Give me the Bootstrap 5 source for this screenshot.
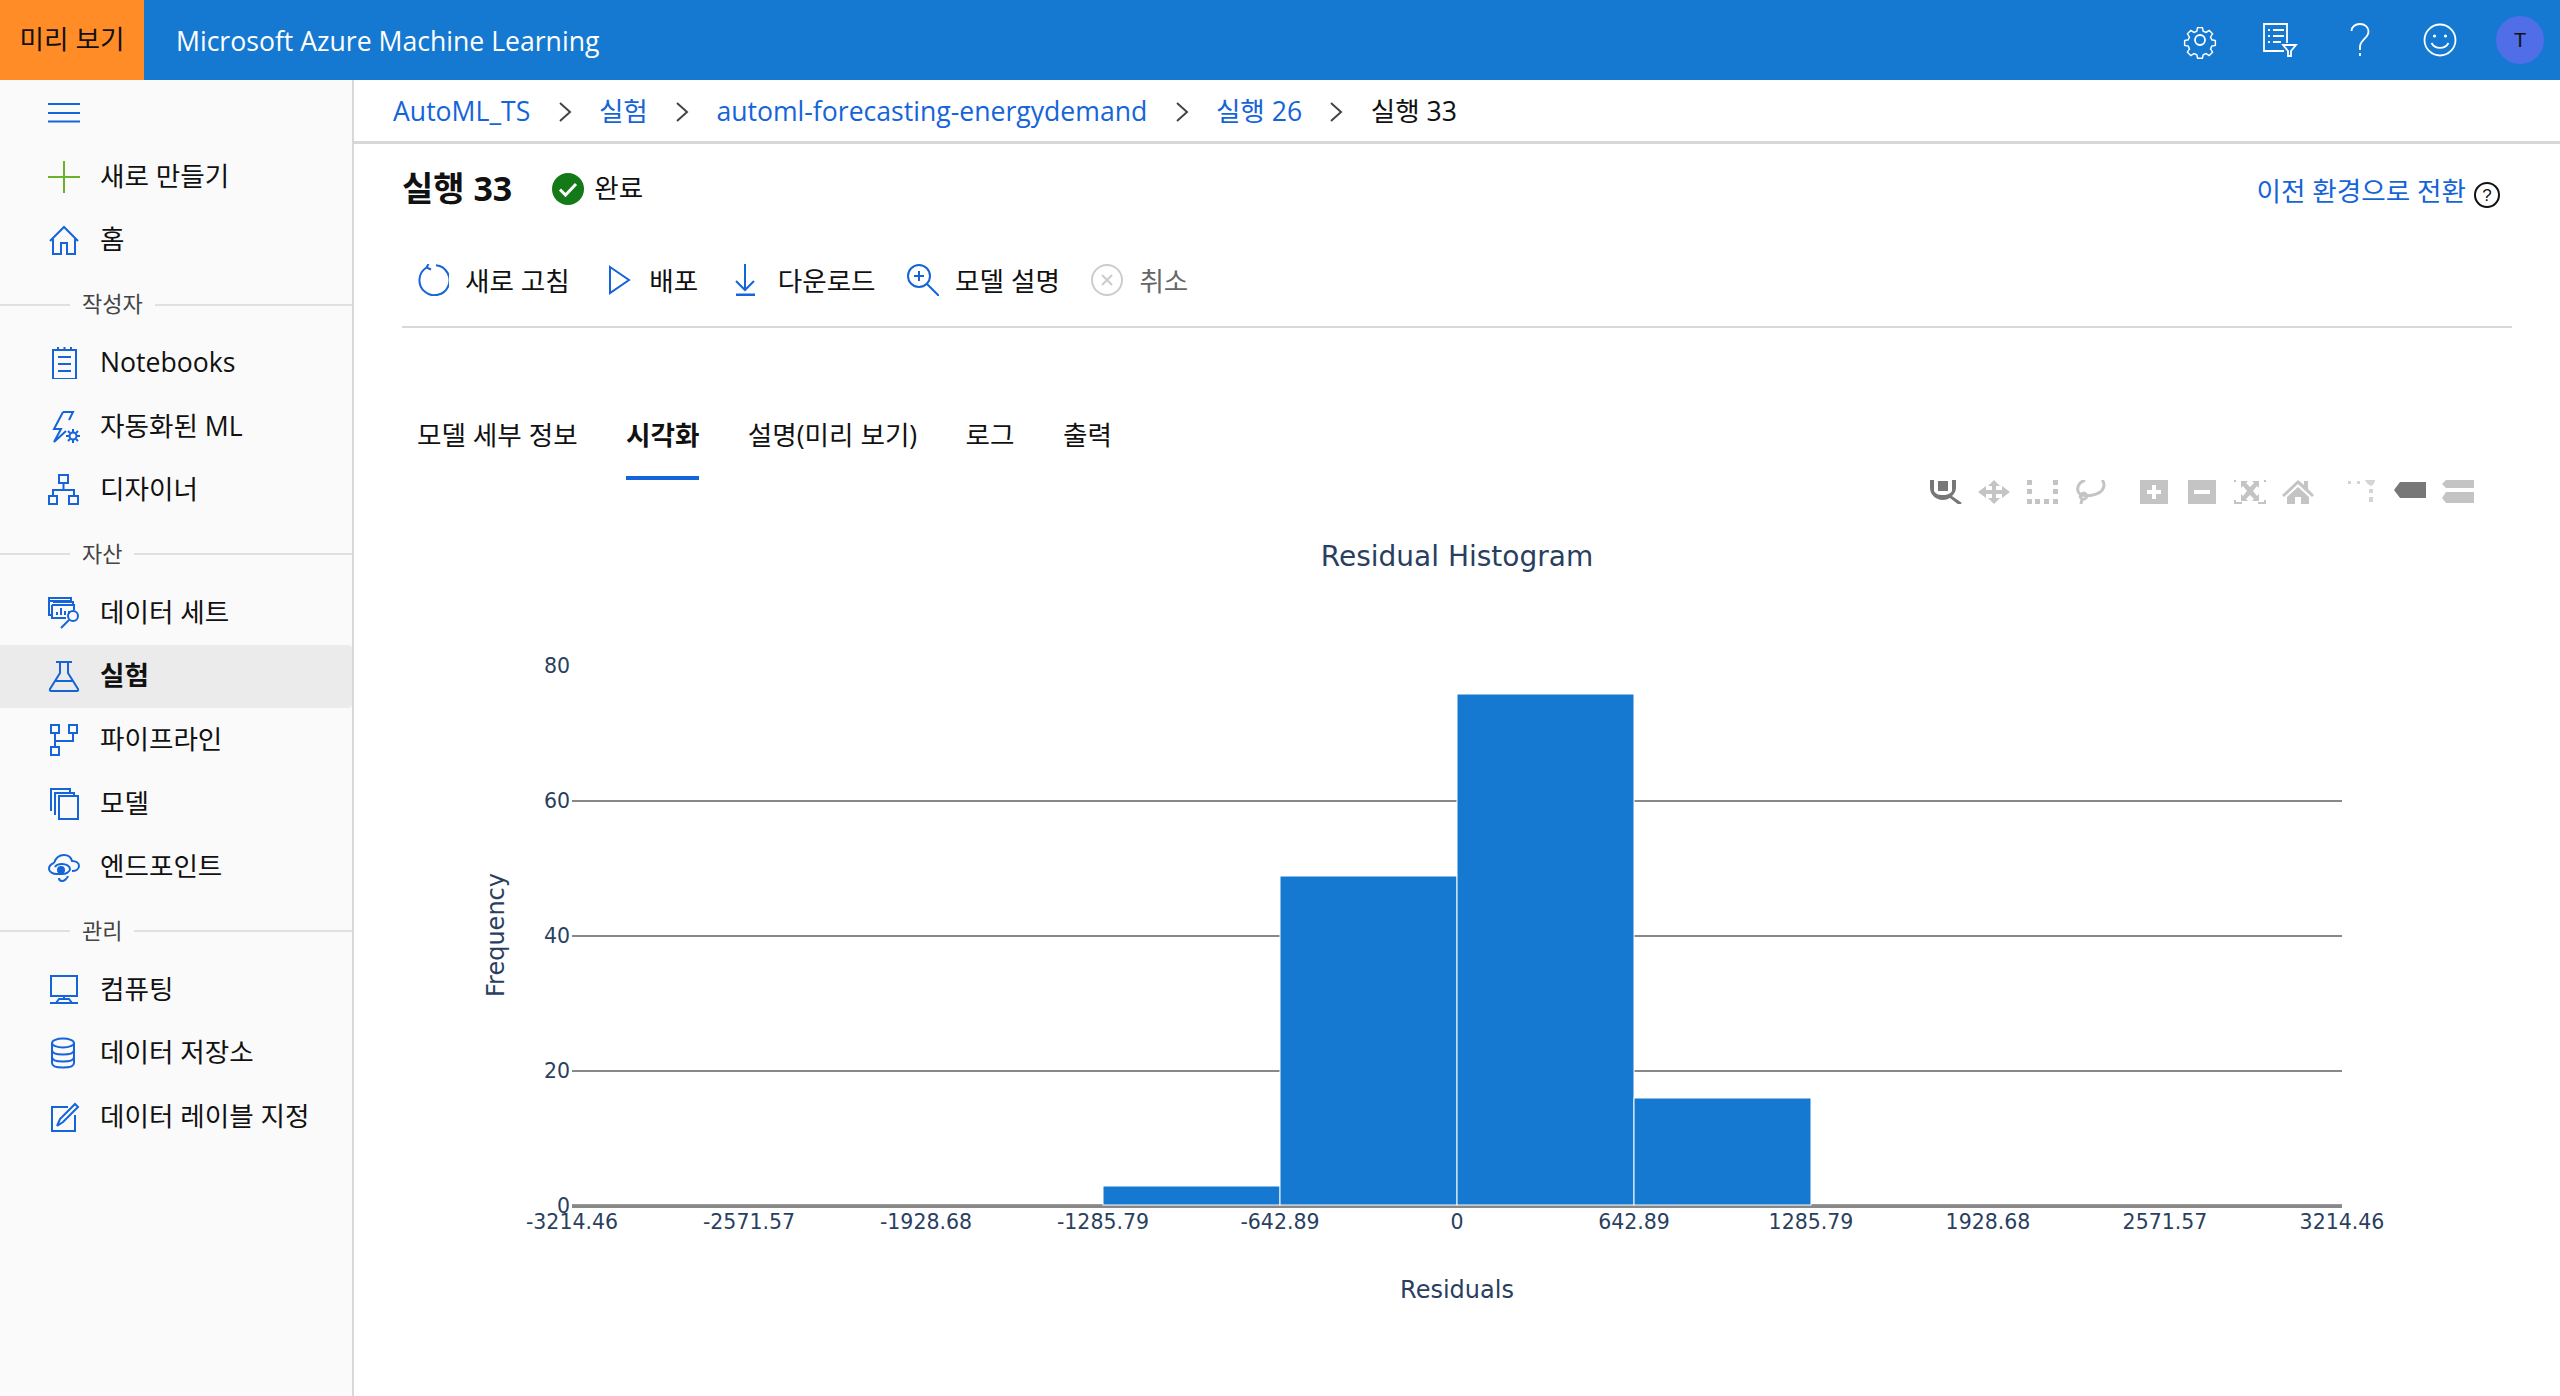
<!DOCTYPE html>
<html lang="ko">
<head>
  <meta charset="UTF-8">
  <title>Microsoft Azure Machine Learning</title>
  <link href="https://cdn.jsdelivr.net/npm/bootstrap@5.3.3/dist/css/bootstrap.min.css" rel="stylesheet">
  <script src="https://cdn.jsdelivr.net/npm/bootstrap@5.3.3/dist/js/bootstrap.bundle.min.js"></script>
  <style>
    body { font-family: "Open Sans", "Noto Sans CJK KR", sans-serif; font-size: 26.6px; color: #111; background: #fff; height: 1396px; overflow: hidden; }
    svg { display: block; flex-shrink: 0; }
    .top-bar { height: 80px; background: #1579d1; padding: 0; flex-wrap: nowrap; }
    .preview-tag { width: 144px; height: 80px; background: #ff8c26; color: #111; }
    .app-name { color: #fff; margin-left: 32px; padding-top: 4px; }
    .top-icons { gap: 32px; padding-right: 16px; }
    .top-icons svg { width: 48px; height: 48px; stroke: #fff; fill: none; stroke-width: 1.8; }
    .avatar { width: 48px; height: 48px; background: #4f6ee8; color: #111; font-size: 20px; font-family: "Liberation Sans", sans-serif; }
    .page-body { height: 1316px; }
    .side-nav { width: 354px; background: #fafafa; border-right: 2px solid #d8d8d8; }
    .side-toggle { height: 65px; padding-left: 48px; }
    .side-item { height: 63.6px; padding-left: 48px; gap: 20px; color: #111; text-decoration: none; }
    .side-item svg, .side-toggle svg { width: 32px; height: 32px; stroke: #1564d9; fill: none; stroke-width: 2; }
    .side-item.current { background: #ebebeb; font-weight: 700; border-radius: 0 4px 4px 0; }
    .side-head { height: 59px; padding-top: 4px; font-size: 22px; color: #444; }
    .side-head::before { content: ""; width: 70px; border-top: 2px solid #e0e0e0; margin: 2px 12px 0 0; }
    .side-head::after { content: ""; flex: 1; border-top: 2px solid #e0e0e0; margin: 2px 0 0 12px; }
    .main-pane { min-width: 0; }
    .crumb-bar { height: 64px; border-bottom: 3px solid #d8d8d8; padding: 2px 0 0 39px; }
    .crumb-link { color: #1564d9; text-decoration: none; }
    .crumb-sep { width: 14px; height: 22px; margin: 0 27.300px; stroke: #444; fill: none; stroke-width: 2; }
    .run-head { padding: 0 48px; height: 90px; }
    .run-title { font-size: 34px; font-weight: 700; margin: 0 0 2px; }
    .state-icon { margin-left: 40px; }
    .state-text { margin-left: 10px; }
    .old-env { margin: 6px 12px 0 0; gap: 8px; }
    .old-env svg { margin-top: 6px; }
    .old-link { color: #1564d9; text-decoration: none; }
    .tool-row { margin: 0 48px; height: 94px; border-bottom: 2px solid #d8d8d8; padding: 4px 0 0 15px; gap: 31.500px; }
    .tool-btn { gap: 16px; padding: 0; border: 0; background: none; color: #111; }
    .tool-btn svg { width: 32px; height: 32px; margin-top: -4px; stroke: #1564d9; fill: none; stroke-width: 2; }
    .tool-btn.is-off { color: #666; }
    .tool-btn.is-off svg { stroke: #ccc; }
    .tab-row { margin: 66px 0 0 63px; gap: 48.400px; }
    .tab-item { color: #111; text-decoration: none; height: 86px; padding-top: 22px; }
    .tab-item.active { font-weight: 700; border-bottom: 4px solid #1564d9; }
    .plot-tools { height: 24px; padding-right: 86px; gap: 16px; }
    .plot-tools svg { width: 32px; height: 24px; fill: #c4c4c4; }
    .plot-tools svg.on { fill: #777; }
    .plot-tools .tool-gap { margin-left: 16px; }
    .plot-box svg text { font-family: "DejaVu Sans", sans-serif; fill: #2a3f5f; }
  </style>
</head>
<body>
  <nav class="navbar top-bar d-flex align-items-center justify-content-between">
    <div class="d-flex align-items-center">
      <div class="preview-tag d-flex align-items-center justify-content-center">미리 보기</div>
      <span class="app-name">Microsoft Azure Machine Learning</span>
    </div>
    <div class="top-icons d-flex align-items-center">
      <svg viewBox="0 0 48 48"><circle cx="24" cy="24" r="5"/><path d="M21 8.500h6l1 4.500 3.500 1.500 4-2.500 4.200 4.200-2.500 4 1.500 3.500 4.500 1v6l-4.500 1-1.500 3.500 2.500 4-4.200 4.200-4-2.500-3.500 1.500-1 4.500h-6l-1-4.500-3.500-1.500-4 2.500-4.200-4.200 2.500-4-1.500-3.500-4.500-1v-6l4.500-1 1.500-3.500-2.500-4 4.200-4.200 4 2.500 3.500-1.500z" transform="translate(4.800 4.800) scale(.8)"/></svg>
      <svg viewBox="0 0 48 48"><path d="M28 35H8V8h23v19"/><path d="M12 14h2M17 14h11M12 20h2M17 20h11M12 26h2M17 26h8"/><path d="M27 29h13l-5 6v5h-3v-5z"/></svg>
      <svg viewBox="0 0 48 48"><path d="M15.500 15c0-4 3.500-7 8.500-7s8.500 3 8.500 7.500c0 7-8.500 8-8.500 15.500v3"/><path d="M24 37v3"/></svg>
      <svg viewBox="0 0 48 48"><circle cx="24" cy="24" r="15.500"/><circle cx="18.500" cy="20" r=".7"/><circle cx="29.500" cy="20" r=".7"/><path d="M15.500 27c3.500 6.500 13.500 6.500 17 0"/></svg>
      <div class="avatar rounded-circle d-flex align-items-center justify-content-center">T</div>
    </div>
  </nav>

  <div class="page-body d-flex">
    <aside class="side-nav flex-shrink-0">
      <div class="side-toggle d-flex align-items-center">
        <svg viewBox="0 0 32 32"><path d="M0 7h32M0 16h32M0 24.500h32"/></svg>
      </div>
      <a class="side-item d-flex align-items-center" href="#"><svg viewBox="0 0 32 32" style="stroke:#6bb129"><path d="M16 0v32M0 16h32"/></svg>새로 만들기</a>
      <a class="side-item d-flex align-items-center" href="#"><svg viewBox="0 0 32 32"><path d="M2 17 16 3l14 14M5 15v15h8V19h6v11h8V15"/></svg>홈</a>
      <div class="side-head d-flex align-items-center">작성자</div>
      <a class="side-item d-flex align-items-center" href="#"><svg viewBox="0 0 32 32"><path d="M5 3h23v29H5zM10 0v3M16.500 0v3M23 0v3M10 10h13M10 17h13M10 24h13"/></svg>Notebooks</a>
      <a class="side-item d-flex align-items-center" href="#"><svg viewBox="0 0 32 32"><path d="M15 1 6 18h7L6 31l12-11M15 1h10l-4 8"/><circle cx="25" cy="25" r="3.500"/><path d="M25 18v3M25 29v3M18 25h3M29 25h3M20 20l2 2M28 28l2 2M20 30l2-2M28 22l2-2"/></svg>자동화된 ML</a>
      <a class="side-item d-flex align-items-center" href="#"><svg viewBox="0 0 32 32"><path d="M11 1h9v8h-9zM1 22h8v8H1zM21 22h9v8h-9zM15.500 9v7M5 22v-6h21v6"/></svg>디자이너</a>
      <div class="side-head d-flex align-items-center">자산</div>
      <a class="side-item d-flex align-items-center" href="#"><svg viewBox="0 0 32 32"><path d="M1 1h22v3H1zM1 4v14h3M5 5h20v3M4 8h22v5M4 8v13h14M9 18v-3M13 18v-7M17 18v-4M21 17v-3"/><circle cx="25" cy="19" r="5"/><path d="M21 23l-8 8"/></svg>데이터 세트</a>
      <a class="side-item current d-flex align-items-center" href="#"><svg viewBox="0 0 32 32"><path d="M8 2h16M12 2v11L2 29c-.5 1 0 2 1 2h26c1 0 1.500-1 1-2L20 13V2M7 21h18"/></svg>실험</a>
      <a class="side-item d-flex align-items-center" href="#"><svg viewBox="0 0 32 32"><path d="M3 1h8v8H3zM21 1h8v8h-8zM3 23h8v8H3zM7 9v14M7 17h18V9"/></svg>파이프라인</a>
      <a class="side-item d-flex align-items-center" href="#"><svg viewBox="0 0 32 32"><path d="M11 8h19v23H11zM7 27V5h19v3M3 23V1h19v4"/></svg>모델</a>
      <a class="side-item d-flex align-items-center" href="#"><svg viewBox="0 0 32 32"><path d="M6 12C8 6 12 4 16 4c4 0 7 2 8 6 4 0 7 2 7 5s-3 5-7 5M6 12c-3 1-5 3-5 6 0 3 4 5 8 5h5c4 0 8-2 8-5 0-3-4-5-8-5-3 0-6 1-7 3"/><circle cx="13" cy="19" r="3" fill="#1564d9"/><path d="M11 27c0 2 1 3 3 3 2 0 5-2 6-5"/></svg>엔드포인트</a>
      <div class="side-head d-flex align-items-center">관리</div>
      <a class="side-item d-flex align-items-center" href="#"><svg viewBox="0 0 32 32"><path d="M3 2h26v20H3zM16 22v3M8 29l3-4h10l3 4M2 29h28"/></svg>컴퓨팅</a>
      <a class="side-item d-flex align-items-center" href="#"><svg viewBox="0 0 32 32"><ellipse cx="15" cy="6" rx="11" ry="4.500"/><path d="M4 6v20c0 3 5 4.500 11 4.500S26 29 26 26V6M4 13c0 3 5 4.500 11 4.500S26 16 26 13M4 20c0 3 5 4.500 11 4.500S26 23 26 20"/></svg>데이터 저장소</a>
      <a class="side-item d-flex align-items-center" href="#"><svg viewBox="0 0 32 32"><path d="M27 14v16H4V6h16M9 25l3-7L27 3l3 3-15 15-6 4"/></svg>데이터 레이블 지정</a>
    </aside>

    <main class="main-pane flex-grow-1">
      <div class="crumb-bar d-flex align-items-center">
        <a class="crumb-link" href="#">AutoML_TS</a>
        <svg class="crumb-sep" viewBox="0 0 14 22"><path d="M2 2l10 9-10 9"/></svg>
        <a class="crumb-link" href="#">실험</a>
        <svg class="crumb-sep" viewBox="0 0 14 22"><path d="M2 2l10 9-10 9"/></svg>
        <a class="crumb-link" href="#">automl-forecasting-energydemand</a>
        <svg class="crumb-sep" viewBox="0 0 14 22"><path d="M2 2l10 9-10 9"/></svg>
        <a class="crumb-link" href="#">실행 26</a>
        <svg class="crumb-sep" viewBox="0 0 14 22"><path d="M2 2l10 9-10 9"/></svg>
        <span>실행 33</span>
      </div>

      <div class="run-head d-flex align-items-center justify-content-between">
        <div class="d-flex align-items-center">
          <h1 class="run-title">실행 33</h1>
          <svg class="state-icon" width="32" height="32" viewBox="0 0 32 32"><circle cx="16" cy="16" r="16" fill="#137a17"/><path d="M8 16.500l5.500 5.500L24 11" fill="none" stroke="#fff" stroke-width="3"/></svg>
          <span class="state-text">완료</span>
        </div>
        <div class="old-env d-flex align-items-center">
          <a class="old-link" href="#">이전 환경으로 전환</a>
          <svg width="26" height="26" viewBox="0 0 26 26"><circle cx="13" cy="13" r="12" fill="none" stroke="#111" stroke-width="2"/><text x="13" y="19" text-anchor="middle" font-size="17" font-family="Liberation Sans, sans-serif" fill="#111">?</text></svg>
        </div>
      </div>

      <div class="tool-row d-flex align-items-center">
        <button class="tool-btn d-flex align-items-center" type="button"><svg viewBox="0 0 32 32"><path d="M9.500 3.500A15 15 0 1 0 19 1.300M11.500 0 9.500 3.500l4.500 2"/></svg>새로 고침</button>
        <button class="tool-btn d-flex align-items-center" type="button"><svg viewBox="0 0 32 32"><path d="M9 3l19 13L9 29z"/></svg>배포</button>
        <button class="tool-btn d-flex align-items-center" type="button"><svg viewBox="0 0 32 32"><path d="M15 0v26M6 17l9 9 9-9"/><path d="M6 31h19" stroke-width="3"/></svg>다운로드</button>
        <button class="tool-btn d-flex align-items-center" type="button"><svg viewBox="0 0 32 32"><circle cx="12" cy="12" r="11"/><path d="M20 20l12 12M12 7v10M7 12h10"/></svg>모델 설명</button>
        <button class="tool-btn is-off d-flex align-items-center" type="button"><svg viewBox="0 0 32 32"><circle cx="16" cy="16" r="15"/><path d="M11 11l10 10M21 11 11 21"/></svg>취소</button>
      </div>

      <div class="tab-row nav">
        <a class="tab-item" href="#">모델 세부 정보</a>
        <a class="tab-item active" href="#">시각화</a>
        <a class="tab-item" href="#">설명(미리 보기)</a>
        <a class="tab-item" href="#">로그</a>
        <a class="tab-item" href="#">출력</a>
      </div>

      <div class="plot-box">
        <div class="plot-tools d-flex justify-content-end">
          <svg class="on" viewBox="0 0 32 24"><path fill-rule="evenodd" d="M0 0h26v8a13 12 0 0 1-4 8l10 7-3 2-9-7A13 12 0 0 1 0 8zM4 0v11c2 3 4 4 9 4s8-2 9-4V0z"/><path d="M8 1h10v10H8z"/></svg>
          <svg viewBox="0 0 32 24"><path d="M16 0l6 6h-4v4h6V6l8 6-8 6v-4h-6v4h4l-6 6-6-6h4v-4H8v4l-8-6 8-6v4h6V6h-4z"/></svg>
          <svg viewBox="0 0 32 24"><path d="M1 0h5v5H1zM27 0h5v5h-5zM1 9h5v5H1zM27 9h5v5h-5zM1 19h5v5H1zM9 19h5v5H9zM18 19h5v5h-5zM27 19h5v5h-5z"/></svg>
          <svg viewBox="0 0 32 24" style="fill:none;stroke:#c4c4c4;stroke-width:3"><path d="M11 0C3 3 1 12 8 15c8 2 22-1 22-10 0-2-1-4-2-5M7 15c3-4 8 0 5 3s-7 0-5-3zM8 19l-1 5"/></svg>
          <svg class="tool-gap" viewBox="0 0 28 24"><path fill-rule="evenodd" d="M0 0h28v24H0zM12 5v5H7v4h5v5h4v-5h5v-4h-5V5z"/></svg>
          <svg viewBox="0 0 28 24"><path fill-rule="evenodd" d="M0 0h28v24H0zM6 10v4h16v-4z"/></svg>
          <svg viewBox="0 0 32 24"><path d="M0 0h2v2H0zM30 0h2v2h-2zM0 20h2v2h6v2H0zM30 20h2v4h-8v-2h6z"/><path d="M7 1h7l-2 2 4 4 4-4-2-2h7v7l-2-2-4 5 4 5 2-2v7h-7l2-2-4-4-4 4 2 2H7v-7l2 2 4-5-4-5-2 2z"/></svg>
          <svg viewBox="0 0 32 24"><path d="M16 0l6 5V1h4v8l6 6-2 2L16 4 2 17l-2-2zM16 7l11 10v7h-8v-7h-6v7H5v-7z"/></svg>
          <svg class="tool-gap" viewBox="0 0 28 24"><path d="M0 1h3v3H0zM9 1h3v3H9zM17 0h10c0 3-2 5-4 6-2-1-5-3-6-6zM21 9h4v4h-4zM21 17h4v5h-4z" style="fill:#d4d4d4"/></svg>
          <svg class="on" viewBox="0 0 32 24"><path d="M6 2h26v16H6l-6-8z"/></svg>
          <svg viewBox="0 0 32 24"><path d="M4 0h28v8H4L0 4zM4 12h28v11H4l-4-5z"/></svg>
        </div>

        <svg width="2206" height="892" viewBox="354 504 2206 892">
          <text x="1457" y="566" text-anchor="middle" font-size="28">Residual Histogram</text>
          <!-- gridlines -->
          <path d="M572 801H2342M572 936H2342M572 1071H2342" stroke="#888" stroke-width="2"/>
          <path d="M572 1204.500H2342" stroke="#999" stroke-width="1"/>
          <path d="M572 1206.500H2342" stroke="#888" stroke-width="3"/>
          <!-- bars: 3, 49, 76, 16 -->
          <g fill="#1579d1" stroke="#fff" stroke-width="1">
            <rect x="1103" y="1186" width="177" height="19"/>
            <rect x="1280" y="876" width="177" height="329"/>
            <rect x="1457" y="694" width="177" height="511"/>
            <rect x="1634" y="1098" width="177" height="107"/>
          </g>
          <g font-size="20.500" text-anchor="end">
            <text x="570" y="673">80</text>
            <text x="570" y="808">60</text>
            <text x="570" y="943">40</text>
            <text x="570" y="1078">20</text>
            <text x="570" y="1213">0</text>
          </g>
          <g font-size="20.500" text-anchor="middle">
            <text x="572" y="1228.500">-3214.46</text>
            <text x="749" y="1228.500">-2571.57</text>
            <text x="926" y="1228.500">-1928.68</text>
            <text x="1103" y="1228.500">-1285.79</text>
            <text x="1280" y="1228.500">-642.89</text>
            <text x="1457" y="1228.500">0</text>
            <text x="1634" y="1228.500">642.89</text>
            <text x="1811" y="1228.500">1285.79</text>
            <text x="1988" y="1228.500">1928.68</text>
            <text x="2165" y="1228.500">2571.57</text>
            <text x="2342" y="1228.500">3214.46</text>
          </g>
          <text x="1457" y="1297.500" text-anchor="middle" font-size="24">Residuals</text>
          <text transform="translate(504 935) rotate(-90)" text-anchor="middle" font-size="24">Frequency</text>
        </svg>
      </div>
    </main>
  </div>
</body>
</html>
